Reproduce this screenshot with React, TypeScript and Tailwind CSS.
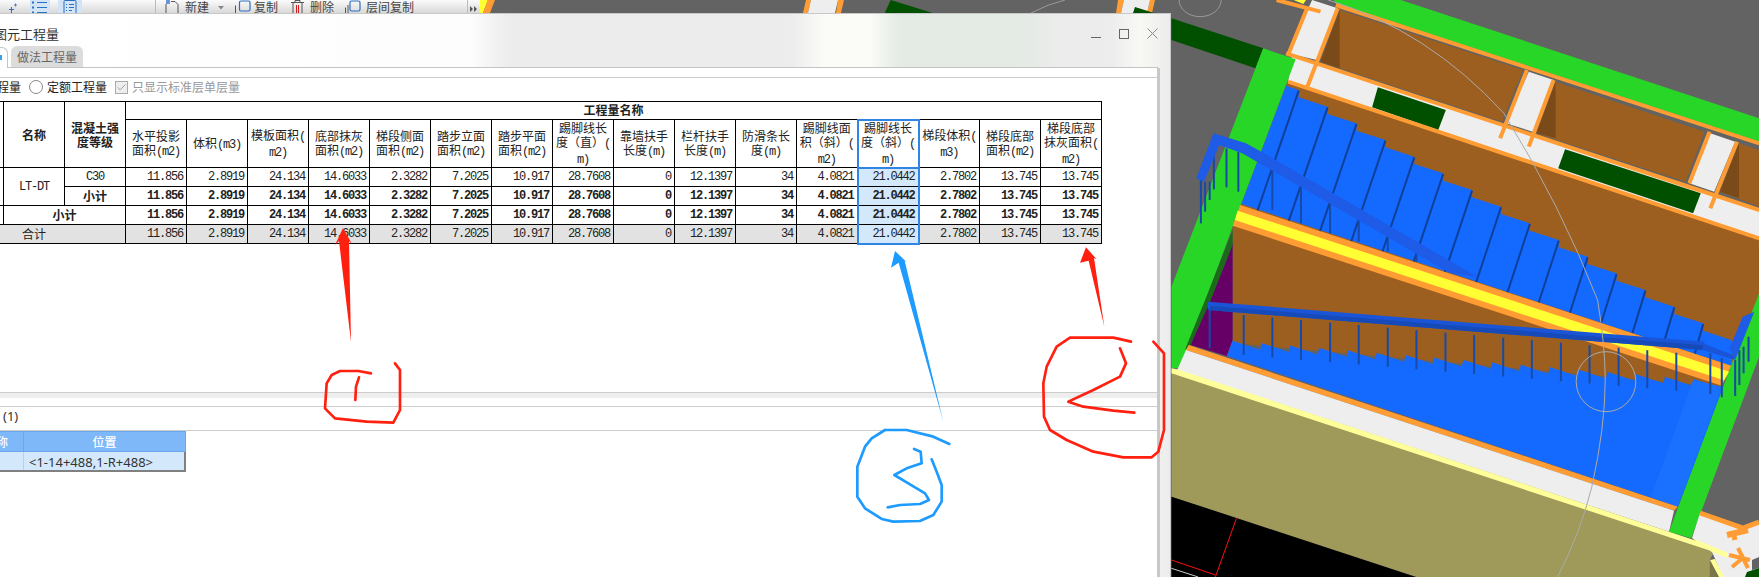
import { Check } from 'lucide-react'

const cjk = "font-['Noto_Sans_CJK_SC',sans-serif]"
const mono = "font-['Liberation_Mono','Noto_Sans_CJK_SC',monospace] tracking-[-1.2px]"

const headers = [
  ['水平投影', '面积(m2)'],
  ['体积(m3)'],
  ['模板面积(', 'm2)'],
  ['底部抹灰', '面积(m2)'],
  ['梯段侧面', '面积(m2)'],
  ['踏步立面', '面积(m2)'],
  ['踏步平面', '面积(m2)'],
  ['踢脚线长', '度（直）(', 'm)'],
  ['靠墙扶手', '长度(m)'],
  ['栏杆扶手', '长度(m)'],
  ['防滑条长', '度(m)'],
  ['踢脚线面', '积（斜）(', 'm2)'],
  ['踢脚线长', '度（斜）(', 'm)'],
  ['梯段体积(', 'm3)'],
  ['梯段底部', '面积(m2)'],
  ['梯段底部', '抹灰面积(', 'm2)'],
]

const values = ['11.856', '2.8919', '24.134', '14.6033', '2.3282', '7.2025', '10.917', '28.7608', '0', '12.1397', '34', '4.0821', '21.0442', '2.7802', '13.745', '13.745']

const ACTIVE = 12

// half-width characters are set in the mono face so they keep the 6px cell of the original
function Mixed({ text }: { text: string }) {
  const parts = text.split(/([\x00-\x7f]+)/).filter(Boolean)
  return (
    <>
      {parts.map((p, i) =>
        /^[\x00-\x7f]/.test(p) ? <span key={i} className={mono}>{p}</span> : <span key={i}>{p}</span>
      )}
    </>
  )
}

function ValueCells({ bold, gray, last }: { bold?: boolean; gray?: boolean; last?: boolean }) {
  return (
    <>
      {values.map((v, i) => {
        const on = i === ACTIVE
        return (
          <td
            key={i}
            className={`p-0 pr-[3px] text-right align-middle border ${mono} ${bold ? 'font-bold' : ''} ${
              on
                ? `bg-[#d4e8fb] border-x-2 border-x-[#2f85e6] border-y-black ${last ? 'border-b-2 border-b-[#2f85e6]' : ''}`
                : `border-black ${gray ? 'bg-[#e2e2e2]' : ''}`
            }`}
          >
            {v}
          </td>
        )
      })}
    </>
  )
}

function QuantityTable() {
  return (
    <table className={`table-fixed border-collapse w-[1121px] -ml-[20px] text-[12px] leading-[14px] text-[#222] ${cjk}`}>
      <colgroup>
        <col className="w-[23px]" />
        <col className="w-[61px]" />
        <col className="w-[61px]" />
        {values.map((_, i) => (
          <col key={i} className="w-[61px]" />
        ))}
      </colgroup>
      <tbody>
        <tr className="h-[18px]">
          <td rowSpan={2} className="p-0 border border-black" />
          <td rowSpan={2} className="p-0 border border-black text-center font-bold">名称</td>
          <td rowSpan={2} className="p-0 border border-black text-center font-bold">混凝土强<br />度等级</td>
          <td colSpan={16} className="p-0 border border-black text-center font-bold">工程量名称</td>
        </tr>
        <tr className="h-[47px]">
          {headers.map((lines, i) => (
            <td
              key={i}
              className={`p-0 text-center align-middle border ${
                i === ACTIVE ? 'border-2 border-[#2f85e6]' : 'border-black'
              }`}
            >
              {lines.map((l, j) => (
                <div key={j} className="whitespace-nowrap"><Mixed text={l} /></div>
              ))}
            </td>
          ))}
        </tr>
        <tr className="h-[19px]">
          <td rowSpan={2} className="p-0 border border-black" />
          <td rowSpan={2} className={`p-0 border border-black text-center ${mono}`}>LT-DT</td>
          <td className={`p-0 border border-black text-center ${mono}`}>C30</td>
          <ValueCells />
        </tr>
        <tr className="h-[19px]">
          <td className="p-0 border border-black text-center font-bold">小计</td>
          <ValueCells bold />
        </tr>
        <tr className="h-[19px]">
          <td className="p-0 border border-black" />
          <td colSpan={2} className="p-0 border border-black text-center font-bold">小计</td>
          <ValueCells bold />
        </tr>
        <tr className="h-[19px]">
          <td colSpan={3} className="p-0 pl-[41px] border border-black bg-[#e2e2e2]">合计</td>
          <ValueCells gray last />
        </tr>
      </tbody>
    </table>
  )
}

function Toolbar() {
  return (
    <div className={`relative flex items-start h-[13px] w-[480px] overflow-hidden bg-gradient-to-b from-[#fbfbfb] to-[#d9d9d9] text-[12px] leading-[14px] text-[#444] ${cjk}`}>
      <svg className="ml-[8px] mt-[3px] shrink-0" width="10" height="10" viewBox="0 0 10 10" fill="none" stroke="#2b6fc4">
        <path d="M1 6.5h5M3.5 4v6" />
        <path d="M7.5 0.5v3M6 2h3" strokeWidth="0.8" />
      </svg>
      <div className="ml-[12px] w-[20px] h-[13px] shrink-0 bg-[#d3e4f6] flex items-start justify-center pt-[1px]">
        <svg width="16" height="12" viewBox="0 0 16 12" fill="none" stroke="#2b6fc4">
          <path d="M0 1.5h2M0 6.5h2M0 11.5h2" strokeWidth="2" />
          <path d="M5 1.5h10M5 6.5h10M5 11.5h10" />
        </svg>
      </div>
      <div className="ml-[8px] w-[24px] h-[13px] shrink-0 bg-[#d3e4f6] flex items-start justify-center">
        <svg width="14" height="13" viewBox="0 0 14 13" fill="none" stroke="#2b6fc4">
          <path d="M1 13V1.5Q1 .5 2 .5h10q1 0 1 1V13" />
          <path d="M3 4.5h1M6 4.5h5M3 7.5h1M6 7.5h5M3 10.5h1M6 10.5h3" />
        </svg>
      </div>
      <div className="ml-[73px] w-px h-[13px] shrink-0 bg-[#bbb]" />
      <svg className="ml-[9px] shrink-0" width="14" height="13" viewBox="0 0 14 13" fill="none" stroke="#555">
        <path d="M1 13V4M6 1.5h4l3 3V13" />
        <path d="M1 0h4v4H1z" fill="#6a93d8" stroke="none" />
      </svg>
      <span className="ml-[6px] shrink-0">新建</span>
      <svg className="ml-[9px] mt-[6px] shrink-0" width="6" height="4" viewBox="0 0 6 4"><path d="M0 0h6L3 3.5z" fill="#888" /></svg>
      <svg className="ml-[11px] shrink-0" width="16" height="13" viewBox="0 0 16 13" fill="none">
        <path d="M.5 13V5.5" stroke="#555" />
        <rect x="4.5" y="1" width="10.5" height="10" rx="1.5" stroke="#2b6fc4" strokeWidth="1.2" />
      </svg>
      <span className="ml-[3px] shrink-0">复制</span>
      <svg className="ml-[13px] shrink-0" width="13" height="13" viewBox="0 0 13 13" fill="none" stroke="#555">
        <path d="M0 2.5h13M4 2.5V.5h5v2M2 2.5V13M11 2.5V13" />
        <path d="M5.5 5v8M7.5 5v8" stroke="#d02020" />
      </svg>
      <span className="ml-[6px] shrink-0">删除</span>
      <svg className="ml-[11px] shrink-0" width="16" height="13" viewBox="0 0 16 13" fill="none">
        <path d="M.5 13V7.5M3 13V5" stroke="#555" />
        <rect x="5" y="1" width="10" height="10" rx="1.5" stroke="#2b6fc4" strokeWidth="1.2" />
      </svg>
      <span className="ml-[5px] shrink-0">层间复制</span>
      <div className="ml-[53px] w-px h-[13px] shrink-0 bg-[#bbb]" />
      <svg className="ml-[2px] mt-[6px] shrink-0" width="7" height="6" viewBox="0 0 7 6"><path d="M0 0l3 3-3 3zM4 0l3 3-3 3z" fill="#555" /></svg>
    </div>
  )
}

function Line({ d, color, w }: { d: string; color: string; w: number }) {
  return <path d={d} fill="none" stroke={color} strokeWidth={w} vectorEffect="non-scaling-stroke" />
}

const stepIdx = Array.from({ length: 15 }, (_, i) => i)
const upperStair =
  '330,257 363,270 ' +
  stepIdx.map((k) => `${363 + 75.6 * k},${270 + 50 * k} ${363 + 75.6 * k},${292 + 50 * k}`).join(' ') +
  ' 1495,1020 1495,1097 213,612'
const lowerTeeth = Array.from({ length: 17 }, (_, k) => `${190 + 75.4 * k},${1022 + 7.2 * k} ${262 + 75.4 * k},${1049 + 7.2 * k}`).join(' ')
const postsX = [219, 294, 369, 445, 520, 596, 671, 747, 822, 898, 973, 1049, 1124, 1200, 1275, 1351]

// 3D view behind the dialog, u/v are the crop coordinates of the right half (v = 3y)
function Scene() {
  return (
    <svg className="absolute inset-0" width="1759" height="577" viewBox="0 0 1759 577">
      <path d="M480 0h8l-5 13h-3z" fill="#ffff33" />
      <path d="M488 0h7l-5 13h-7zM806 0h5l-3 13h-5zM838 0h6l-3 13h-5zM1118 0h6l-3 13h-5zM1150 0h5l-3 13h-5z" fill="#ff9c33" />
      <path d="M811 0h27l-3 13h-27zM1124 0h26l-3 13h-26z" fill="#eee" />
      <path d="M890.7 0l42 13h-48zM1135 7l19 6h-21z" fill="#005000" />
      <path d="M1031 13Q1048 4 1065 0" fill="none" stroke="#999" />
      <g transform="translate(1160 0) scale(0.38217 0.33333)">
        <polygon points="30,55 270,145 250,205 30,120" fill="#005000" />
        <path d="M50 0A55 50 0 0 0 160 0" fill="none" stroke="#999" strokeWidth="1" vectorEffect="non-scaling-stroke" />
        <polygon points="350,0 382,0 375,12" fill="#ffff33" />
        <polygon points="455,0 630,0 1568,355 1568,425 460,10" fill="#28d628" />
        {/* bays */}
        <polygon points="470,30 950,210 895,365 420,185" fill="#9c5f20" />
        <polygon points="1035,245 1425,395 1375,545 985,400" fill="#9c5f20" />
        <polygon points="1515,430 1568,450 1568,620 1465,575" fill="#9c5f20" />
        <polygon points="470,30 470,205 420,185" fill="#7a4a18" />
        <polygon points="1035,245 1035,415 985,400" fill="#7a4a18" />
        <polygon points="1515,430 1515,595 1465,575" fill="#7a4a18" />
        <polygon points="398,0 465,25 410,180 335,160" fill="#eee" />
        <polygon points="965,215 1030,240 975,395 905,370" fill="#eee" />
        <polygon points="1440,400 1505,425 1450,575 1385,550" fill="#eee" />
        {/* strip */}
        <polygon points="345,165 1568,630 1568,715 335,245" fill="#eee" />
        <polygon points="570,262 748,330 728,390 555,322" fill="#005000" />
        <polygon points="1060,448 1415,580 1395,640 1042,505" fill="#005000" />
        {/* lower room */}
        <polygon points="335,245 1568,715 1568,879 1500,1080 1470,1160 190,1030 190,680" fill="#9c5f20" />
        <polygon points="190,730 190,1020 175,1068 80,1035 150,840" fill="#660066" />
        <polygon points="270,145 355,178 190,680 120,900 75,1035 50,1105 30,1105 30,860" fill="#28d628" />
        <polygon points="190,690 190,735 133,900 80,1035 65,1050 118,900" fill="#1a6b1a" />
        {/* orange frame lines */}
        <Line d="M460 15L1568 430M330 160L1568 630M335 245L1568 715" color="#ff9c33" w={4} />
        <Line d="M385 25L335 165M465 25L385 262M305 0L420 35M960 210L890 415M1030 240L965 440M1438 395L1385 550M1510 425L1440 625" color="#ff9c33" w={4} />
        {/* upper flight */}
        <polygon points={upperStair} fill="#146aff" />
        {stepIdx.map((k) => {
          const u = 363 + 75.6 * k
          const v = 292 + 50 * k
          const t = (615 + 0.375 * (u - 210) - v) / 1.119
          return <Line key={k} d={`M${u} ${v - 20}L${u - 0.317 * t} ${v + t}`} color="#0f3f9a" w={2} />
        })}
        <polygon points="210,615 1495,1097 1470,1157 190,677" fill="#ff9c33" />
        <polygon points="203,632 1490,1115 1476,1141 196,660" fill="#ffff33" />
        {/* upper rail */}
        {[[107, 540, 670], [118, 545, 635], [130, 545, 600], [141, 470, 568], [174, 445, 562], [205, 455, 575], [294, 510, 630], [369, 560, 670], [445, 610, 700], [520, 660, 725], [596, 710, 755], [671, 760, 785]].map(([u, a, b]) => (
          <Line key={u} d={`M${u} ${a}V${b}`} color="#174aa8" w={2} />
        ))}
        <polygon points="140,400 225,430 265,455 830,830 760,820 215,460 155,435 115,545 95,535" fill="#1e5be6" />
        {/* lower floor */}
        <polygon points={`190,1022 ${lowerTeeth} 1470,1160 1480,1170 1355,1520 175,1068`} fill="#146aff" />
        <polygon points="1395,1140 1470,1160 1355,1520 1285,1490" fill="#1a70ff" />
        <polygon points="75,1035 1355,1520 1345,1532 68,1050" fill="#ff9c33" />
        <polygon points="68,1050 1345,1532 1332,1595 45,1110" fill="#eee" />
        {/* right column */}
        <polygon points="1568,879 1568,1069 1390,1615 1332,1595 1500,1080" fill="#28d628" />
        {/* lower rail */}
        {postsX.map((u) => (
          <Line key={u} d={`M${u} ${945 + (u - 219) * 0.1}V${1065 + (u - 219) * 0.0947}`} color="#174aa8" w={2} />
        ))}
        <path d="M130 930V1045M1440 1060V1182M1470 1075V1192M1505 1080V1188M1516 1050V1155M1527 1040V1120M1540 1010V1085" fill="none" stroke="#174aa8" strokeWidth="2" vectorEffect="non-scaling-stroke" />
        <polygon points="125,905 1425,1025 1420,1050 125,930" fill="#1a55d8" />
        <polygon points="135,918 1423,1036 1420,1050 125,930" fill="#164ab8" />
        <polygon points="1420,1030 1500,1065 1505,1080 1420,1050" fill="#1a55d8" />
        <polygon points="1525,950 1555,935 1505,1080 1490,1045" fill="#1e5be6" />
        {/* front wall */}
        <polygon points="30,1118 1450,1654 1439,1680 1439,1731 670,1731 30,1490" fill="#9f9a5a" />
        <polygon points="1439,1680 1463,1731 1439,1731" fill="#7a7548" />
        <polygon points="30,1105 45,1108 1332,1595 1490,1655 1490,1672 1450,1656 30,1120" fill="#ffff99" />
        <polygon points="30,1490 670,1731 30,1731" fill="#000" />
        <Line d="M200 1555L145 1731M30 1680L145 1725" color="#ff1010" w={1} />
        <Line d="M30 1705L100 1731" color="#ccc" w={1} />
        {/* construction arc and circle */}
        <Line d="M440 0Q700 90 900 340Q1050 620 1145 900Q1165 1040 1165 1140Q1165 1280 1130 1460Q1100 1600 1040 1731" color="#aaa" w={1} />
        <ellipse cx="1167" cy="1145" rx="78" ry="90" fill="none" stroke="#aaa" strokeWidth="1" vectorEffect="non-scaling-stroke" />
      </g>
      {/* bottom right corner, plain pixels */}
      <polygon points="1700,513 1743,528 1759,522 1759,577 1723,577 1712,552 1692,538" fill="#eee" />
      <polygon points="1712,552 1692,538 1728,553 1728,558" fill="#ffff99" />
      <polygon points="1710,560 1715,559 1724,577 1719,577" fill="#ffff99" />
      <path d="M1700 513L1743 528L1759 522" fill="none" stroke="#ff9c33" strokeWidth="5" />
      <path d="M1727 535L1748 530" stroke="#ff9c33" strokeWidth="6" fill="none" />
      <path d="M1733 532L1735 540" stroke="#ff9c33" strokeWidth="5" fill="none" />
      <path d="M1738 548L1748 568M1729 555L1750 560M1732 567L1744 557" stroke="#ff9c33" strokeWidth="4" fill="none" />
      <polygon points="1752,560 1759,557 1759,568 1752,570" fill="#636363" />
      <polygon points="1747,572 1759,568 1759,577 1745,577" fill="#005000" />
    </svg>
  )
}

function Marks() {
  return (
    <svg className="absolute inset-0 pointer-events-none" width="1759" height="577" viewBox="0 0 1759 577">
      <polygon points="343,228 352,244 349,241 351,342 339,241 335,245" fill="#ff2010" />
      <g transform="translate(0 330) scale(0.33333)" fill="none" stroke="#ff2010" strokeWidth="8" strokeLinejoin="round" strokeLinecap="round">
        <polyline points="1113,130 1075,123 1020,123 995,135 980,160 975,235 1005,265 1100,275 1180,278 1200,240 1200,120 1185,100" />
        <polyline points="1077,142 1068,170 1066,210" />
      </g>
      <g transform="translate(800 220) scale(0.33333)" fill="none" strokeWidth="8" strokeLinejoin="round" strokeLinecap="round">
        <polygon points="285,93 322,128 314,122 430,605 296,128 273,143" fill="#1e9bff" stroke="none" />
        <g stroke="#1e9bff">
          <polyline points="448,672 400,650 320,630 255,630 215,655 195,680 172,740 172,830 195,865 245,897 280,905 360,903 400,885 425,845 425,795 410,755 395,718" />
          <polyline points="342,687 362,695 365,730 320,745 283,765 325,790 375,820 387,840 360,852 300,855 263,862" />
        </g>
        <polygon points="858,82 890,118 882,114 913,320 866,122 840,128" fill="#ff2010" stroke="none" />
        <g stroke="#ff2010">
          <polyline points="993,365 940,353 810,353 770,380 740,440 730,490 732,590 750,630 800,660 880,695 970,712 1055,712 1075,695 1092,630 1092,400 1060,365" />
          <polyline points="960,385 978,430 960,470 880,510 805,545 850,560 940,572 1003,578" />
        </g>
      </g>
    </svg>
  )
}

function QuantityWindow() {
  return (
    <section
      className={`absolute left-0 top-[13px] bottom-0 w-[1171px] flex flex-col overflow-hidden border-t border-r border-[#c8c8c8] bg-[linear-gradient(to_right,#fff_0,#fdfdfd_470px,#ececec_510px,#ececec_790px,#fbfbf8_825px,#fbfbf8_870px,#e4eae4_900px,#e4eae4_1020px,#ececec_1060px,#ececec_1110px,#f8f8f5_1140px,#ececec_1170px)] ${cjk}`}
    >
      {/* title bar */}
      <div className="flex items-center justify-between h-[32px] shrink-0 pt-[7px] pr-[12px]">
        <span className="-ml-[6px] text-[13px] text-[#333]">图元工程量</span>
        <div className="flex items-center gap-[18px]">
          <svg width="10" height="10" viewBox="0 0 10 10"><path d="M0 8.5h10" stroke="#666" /></svg>
          <svg width="10" height="10" viewBox="0 0 10 10"><rect x=".5" y=".5" width="9" height="9" fill="none" stroke="#666" /></svg>
          <svg width="11" height="11" viewBox="0 0 11 11"><path d="M.5.5l10 10M10.5.5l-10 10" stroke="#888" /></svg>
        </div>
      </div>
      {/* tabs */}
      <div className="flex items-end h-[22px] w-[1158px] shrink-0 border-b border-[#c4c4c4]">
        <div className="w-[8px] h-[21px] -mb-px bg-white border-r border-t border-[#c4c4c4] rounded-tr-md overflow-hidden">
          <div className="mt-[7px] w-[2px] h-[5px] bg-[#38a0e8]" />
        </div>
        <div className="ml-[3px] w-[72px] h-[21px] bg-[#dcdcdc] rounded-t-md text-center text-[12px] leading-[21px] text-[#666]">做法工程量</div>
      </div>
      {/* content */}
      <div className="flex flex-col flex-1 w-[1160px] bg-white border-r-[3px] border-[#c8c8c8] text-[12px]">
        <div className="flex items-center h-[24px] mt-[9px] pb-[5px] border-t border-[#ccc] shrink-0">
          <span className="-ml-[3px] text-[#222]">程量</span>
          <span className="ml-[8px] w-[14px] h-[14px] rounded-full border border-[#888] bg-white" />
          <span className="ml-[4px] text-[#222]">定额工程量</span>
          <span className="ml-[8px] flex items-center justify-center w-[13px] h-[13px] border border-[#aaa] bg-[#eee]">
            <Check size={11} strokeWidth={2} className="text-[#999]" />
          </span>
          <span className="ml-[4px] text-[#999]">只显示标准层单层量</span>
        </div>
        <div className="h-[291px] shrink-0 overflow-hidden">
          <QuantityTable />
        </div>
        <div className="h-[6px] shrink-0 border-t border-[#ccc] bg-[#eee]" />
        <div className="h-[8px] shrink-0" />
        <div className="flex items-center h-[25px] pb-[3px] shrink-0 border-y border-[#ccc] pl-[3px] text-[13px] text-[#333] font-['Noto_Sans',sans-serif]">(1)</div>
        <div className="w-[186px] text-center">
          <div className="flex h-[21px] bg-[#7fb8f8] border border-[#6aa8ee] border-l-0 text-white font-medium leading-[19px]">
            <div className="w-[24px] border-r border-[#6aa8ee] text-left overflow-hidden whitespace-nowrap"><span className="inline-block -ml-[4px]">称</span></div>
            <div className="flex-1">位置</div>
          </div>
          <div className="flex h-[20px] bg-[#d4e8fb] border-r-2 border-b-2 border-[#808080] leading-[20px] text-[#333]">
            <div className="w-[24px] border-r border-[#ccc]" />
            <div className="flex-1 pl-[5px] text-left text-[13px] whitespace-nowrap font-['Noto_Sans',sans-serif]">&lt;1-14+488,1-R+488&gt;</div>
          </div>
        </div>
      </div>
    </section>
  )
}

export default function App() {
  return (
    <div className="relative w-[1759px] h-[577px] overflow-hidden bg-[#636363]">
      <Scene />
      <Toolbar />
      <QuantityWindow />
      <Marks />
    </div>
  )
}
